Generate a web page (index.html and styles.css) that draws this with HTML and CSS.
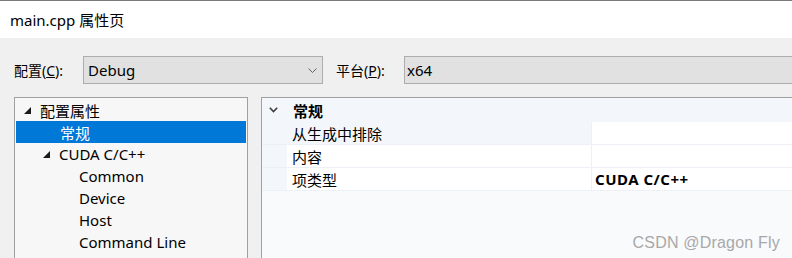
FILE: index.html
```html
<!DOCTYPE html>
<html>
<head>
<meta charset="utf-8">
<link rel="stylesheet" href="styles.css">
</head>
<body>
<div class="window">
  <div class="titlebar">main.cpp 属性页</div>
  <div class="toolbar">
    <span class="label lbl-config">配置(<u>C</u>):</span>
    <div class="combo combo-config">
      <span>Debug</span>
      <svg class="combo-arrow" width="9" height="6" viewBox="0 0 9 6"><polyline points="0.5,0.5 4.5,4.5 8.5,0.5" fill="none" stroke="#606060" stroke-width="1"/></svg>
    </div>
    <span class="label lbl-platform">平台(<u>P</u>):</span>
    <div class="combo combo-platform"><span>x64</span></div>
  </div>
  <div class="main">
    <div class="tree">
      <div class="node lvl0"><svg class="tri" width="7" height="7" viewBox="0 0 7 7"><polygon points="7,0 7,7 0,7" fill="#1a1a1a"/></svg><span>配置属性</span></div>
      <div class="node lvl1 selected"><span>常规</span></div>
      <div class="node lvl1b"><svg class="tri" width="7" height="7" viewBox="0 0 7 7"><polygon points="7,0 7,7 0,7" fill="#1a1a1a"/></svg><span>CUDA C/C++</span></div>
      <div class="node lvl2"><span>Common</span></div>
      <div class="node lvl2"><span>Device</span></div>
      <div class="node lvl2"><span>Host</span></div>
      <div class="node lvl2"><span>Command Line</span></div>
    </div>
    <div class="grid">
      <div class="grid-header">
        <svg class="chev" width="9" height="6" viewBox="0 0 9 6"><polyline points="0.8,0.8 4.5,4.6 8.2,0.8" fill="none" stroke="#3c3c3c" stroke-width="1.6"/></svg>
        <span class="cat">常规</span>
      </div>
      <div class="prow focus"><div class="gutter"></div><div class="pname">从生成中排除</div><div class="pval"></div></div>
      <div class="prow"><div class="gutter"></div><div class="pname">内容</div><div class="pval"></div></div>
      <div class="prow"><div class="gutter"></div><div class="pname">项类型</div><div class="pval bold">CUDA C/C++</div></div>
      <div class="watermark">CSDN @Dragon Fly</div>
    </div>
  </div>
</div>
</body>
</html>
```
FILE: styles.css
```css
html, body {
  margin: 0;
  padding: 0;
}
body {
  width: 792px;
  height: 258px;
  overflow: hidden;
  background: #f0f0f0;
  font-family: "Noto Sans", "Noto Sans CJK SC", sans-serif;
  font-size: 14px;
  color: #000;
}
.window {
  display: flex;
  flex-direction: column;
  height: 258px;
}
.titlebar {
  border-top: 1px solid #7a7a7a;
  background: #fff;
  padding-left: 10px;
  box-sizing: border-box;
  height: 38px;
  display: flex;
  align-items: center;
  font-size: 15px;
  padding-bottom: 1px;
}
.toolbar {
  display: flex;
  align-items: center;
  margin-top: 18px;
  padding-left: 14px;
  height: 28px;
}
.label {
  white-space: nowrap;
}
.lbl-config { width: 69px; }
.lbl-platform { width: 68px; margin-left: 13px; }
.combo {
  box-sizing: border-box;
  height: 28px;
  border: 1px solid #adadad;
  background: #e1e1e1;
  display: flex;
  align-items: center;
  padding-left: 4px;
  font-size: 15px;
}
.combo-config {
  width: 240px;
  justify-content: space-between;
  padding-right: 5px;
}
.combo-arrow { margin-top: 1px; }
.combo-platform {
  flex: 1;
  margin-right: -2px;
  padding-left: 2px;
}
.main {
  display: flex;
  margin-top: 13px;
  padding-left: 14px;
  flex: 1;
  gap: 13px;
}
.tree {
  box-sizing: border-box;
  width: 234px;
  border: 1px solid #a0a0a0;
  border-bottom: none;
  background: #f7f7f7;
  padding: 1px 1px 0 1px;
}
.node {
  height: 22px;
  display: flex;
  align-items: center;
  font-size: 15px;
  white-space: nowrap;
}
.node .tri { margin-right: 9px; margin-top: 1px; }
.lvl0 { padding-left: 8px; }
.lvl1 { padding-left: 44px; }
.lvl1b { padding-left: 27px; }
.lvl2 { padding-left: 63px; }
.selected {
  background: #0078d7;
  color: #fff;
}
.grid {
  flex: 1;
  position: relative;
  border-top: 1px solid #a0a0a0;
  border-left: 1px solid #a0a0a0;
  background: #f9fafc;
  margin-right: -2px;
  font-size: 15px;
}
.grid-header {
  height: 24px;
  background: #f3f6fb;
  display: flex;
  align-items: center;
  padding-left: 7px;
}
.chev { margin-right: 15px; }
.cat { font-weight: bold; }
.prow {
  display: flex;
  height: 23px;
  box-sizing: border-box;
  border-bottom: 1px solid #edf1f7;
}
.gutter {
  width: 25px;
  background: #f3f6fb;
}
.pname {
  width: 305px;
  box-sizing: border-box;
  padding-left: 5px;
  background: #fff;
  border-right: 1px solid #edf1f7;
  display: flex;
  align-items: center;
}
.focus .pname { background: #f3f6fb; }
.pval {
  flex: 1;
  background: #fff;
  display: flex;
  align-items: center;
  padding-left: 3px;
}
.bold { font-weight: bold; letter-spacing: 0.5px; }
.watermark {
  position: absolute;
  right: 14px;
  bottom: 6px;
  font-family: "Liberation Sans", Arial, sans-serif;
  font-size: 16px;
  letter-spacing: 0.2px;
  color: #a8a8a8;
}
```
